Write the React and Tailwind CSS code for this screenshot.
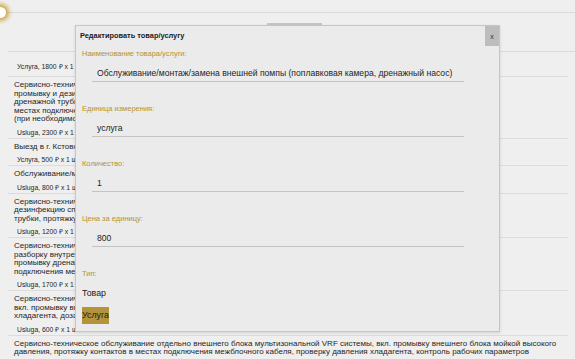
const ITEMS = [
  { lines: [], meta: 'Услуга, 1800 ₽ x 1 шт. = 1800 ₽', first: true },
  {
    lines: [
      'Сервисно-техническое обслуживание внутреннего блока кассетного типа, вкл. чистку теплообменника внутреннего блока,',
      'промывку и дезинфекцию теплообменника и дренажной системы, чистку декоративной панели, очистку дренажного поддона,',
      'дренажной трубки, проверку давления хладагента и рабочих параметров системы, протяжка контактов в',
      'местах подключения межблочного кабеля, дозаправка хладагентом в пределах 300гр',
      '(при необходимости)',
    ],
    meta: 'Usluga, 2300 ₽ x 1 шт. = 2300 ₽',
  },
  { lines: ['Выезд в г. Кстово'], meta: 'Услуга, 500 ₽ x 1 шт. = 500 ₽' },
  { lines: ['Обслуживание/монтаж/замена внешней помпы (поплавковая камера, дренажный насос)'], meta: 'Usluga, 800 ₽ x 1 шт. = 800 ₽' },
  {
    lines: [
      'Сервисно-техническое обслуживание внутреннего блока канального типа, вкл. чистку фильтров внутреннего блока, промывку и',
      'дезинфекцию спиральной щеткой теплообменника, вентилятора, очистку дренажного поддона и дренажной',
      'трубки, протяжку контактов в местах подключения',
    ],
    meta: 'Usluga, 1200 ₽ x 1 шт. = 1200 ₽',
  },
  {
    lines: [
      'Сервисно-техническое обслуживание внутреннего блока настенного типа с полной разборкой, вкл. сборку-',
      'разборку внутреннего блока, чистку вентилятора и дезинфекцию теплообменника (испарителя),',
      'промывку дренажного поддона и дренажной трубки, проверку давления, протяжку контактов в местах',
      'подключения межблочного кабеля',
    ],
    meta: 'Usluga, 1700 ₽ x 1 шт. = 1700 ₽',
  },
  {
    lines: [
      'Сервисно-техническое обслуживание внутреннего блока мультизональной системы (в составе VRF системы),',
      'вкл. промывку внутреннего блока, чистку фильтров, протяжку контактов, проверку давления',
      'хладагента, дозаправку хладагентом при необходимости, стоимость включает выезд в г. Кстово.',
    ],
    meta: 'Usluga, 600 ₽ x 1 шт. = 600 ₽',
  },
  {
    lines: [
      'Сервисно-техническое обслуживание отдельно внешнего блока мультизональной VRF системы, вкл. промывку внешнего блока мойкой высокого',
      'давления, протяжку контактов в местах подключения межблочного кабеля, проверку давления хладагента, контроль рабочих параметров',
      'системы',
    ],
    meta: 'Usluga, 2100 ₽ x 1 шт. = 2100 ₽',
  },
]

const FIELDS = [
  { label: 'Наименование товара/услуги:', value: 'Обслуживание/монтаж/замена внешней помпы (поплавковая камера, дренажный насос)' },
  { label: 'Единица измерения:', value: 'услуга' },
  { label: 'Количество:', value: '1' },
  { label: 'Цена за единицу:', value: '800' },
]

function ListItem({ item }) {
  return (
    <div
      className={`border-t ${item.first ? 'border-[#dadada] -mr-[7px] pt-[10px] pb-[5px]' : 'border-[#dcdcdc] pt-[4px] pb-[1px]'}`}
    >
      {item.lines.map((l, i) => (
        <div key={i} className="pl-[6px] text-[8px] leading-[8.5px] whitespace-nowrap">
          {l}
        </div>
      ))}
      <div className={`pl-[9px] text-[6.8px] leading-[9px] whitespace-nowrap ${item.first ? '' : 'mt-[4px]'}`}>{item.meta}</div>
    </div>
  )
}

function Field({ label, value }) {
  return (
    <div className="mb-[22px]">
      <div className="text-[7.5px] leading-[9px] text-[#b3942e]">{label}</div>
      <div className="ml-[10px] mt-[7px] w-[372px] h-[17px] border-b border-[#c3c3c3] pl-[5px] text-[8.6px] leading-[16px] text-[#1e1e1e] whitespace-nowrap">
        {value}
      </div>
    </div>
  )
}

export default function App() {
  return (
    <div className="relative w-[575px] h-[359px] overflow-hidden bg-[#efefef] text-[#262626] font-['Liberation_Sans',Arial,sans-serif]">
      {/* timeline line */}
      <div className="pt-[12px] pl-[7px]">
        <div className="h-px bg-[#dadada]" />
      </div>

      {/* strip with scroll thumb */}
      <div className="h-[38px] pl-[267px] pt-[10px]">
        <div className="w-[55px] h-[3px] bg-[#c6c6c6]" />
      </div>

      {/* order list */}
      <div className="ml-[8px] mr-[7px]">
        {ITEMS.map((item, i) => (
          <ListItem key={i} item={item} />
        ))}
      </div>

      {/* timeline dot */}
      <div className="absolute -left-[5px] top-[7px] w-[11px] h-[11px] rounded-full bg-white shadow-[0_0_4px_3px_rgba(196,154,40,0.85)]" />

      {/* edit dialog */}
      <div className="absolute left-[75px] top-[25px] w-[425px] h-[307px] bg-[#ebebeb] border border-[#c6c6c6] shadow-[0_1px_3px_rgba(0,0,0,0.12)]">
        <div className="flex items-center justify-between h-[20px]">
          <div className="pl-[4px] text-[7.4px] font-bold text-[#1a1a1a]">Редактировать товар/услугу</div>
          <button className="w-[14px] h-[20px] bg-[#bdbdbd] text-[7px] text-[#333] leading-none">x</button>
        </div>
        <div className="pl-[6px] pt-[3px]">
          {FIELDS.map(f => (
            <Field key={f.label} {...f} />
          ))}
          <div className="text-[7.5px] leading-[9px] text-[#b3942e]">Тип:</div>
          <div className="mt-[7px] text-[8.8px] leading-[16px] text-[#1a1a1a]">Товар</div>
          <div className="mt-[5px] inline-block h-[17px] bg-[#b3943a] text-[8.8px] leading-[17px] text-[#1a1a1a]">Услуга</div>
        </div>
      </div>
    </div>
  )
}
